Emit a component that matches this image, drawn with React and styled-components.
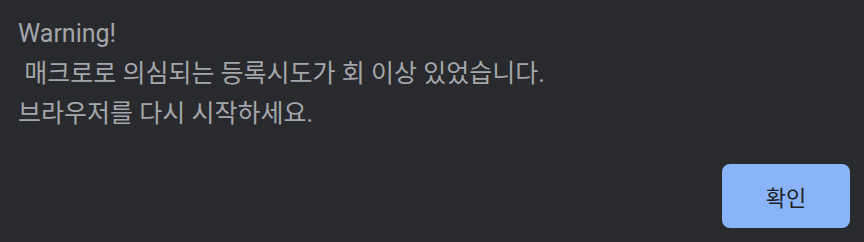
import React from 'react'
import styled, { createGlobalStyle } from 'styled-components';

const GlobalStyle = createGlobalStyle`
    html, body {
        margin: 0;
        padding: 0;
        background: #292a2d;
    }
`

const Dialog = styled.div`
    box-sizing: border-box;
    width: 864px;
    height: 242px;
    display: flex;
    flex-direction: column;
    justify-content: space-between;
    padding: 14px 14px 14px 18px;
    background: #292a2d;
    font-family: Roboto, "Noto Sans CJK KR", sans-serif;
`

const Message = styled.div`
    color: #a3a6ab;
    font-size: 25px;
    line-height: 40px;
    white-space: pre-wrap;
`

const ButtonRow = styled.div`
    display: flex;
    justify-content: flex-end;
`

const ConfirmButton = styled.button`
    width: 128px;
    height: 64px;
    border: none;
    border-radius: 8px;
    background: #8ab4f8;
    color: #202124;
    font-family: Roboto, "Noto Sans CJK KR", sans-serif;
    font-size: 22px;
    cursor: pointer;
`

export default function App() {
    const message = 'Warning!\n 매크로로 의심되는 등록시도가 회 이상 있었습니다.\n브라우저를 다시 시작하세요.'

    return (
        <>
            <GlobalStyle />
            <Dialog>
                <Message>{message}</Message>
                <ButtonRow>
                    <ConfirmButton>확인</ConfirmButton>
                </ButtonRow>
            </Dialog>
        </>
    )
}
